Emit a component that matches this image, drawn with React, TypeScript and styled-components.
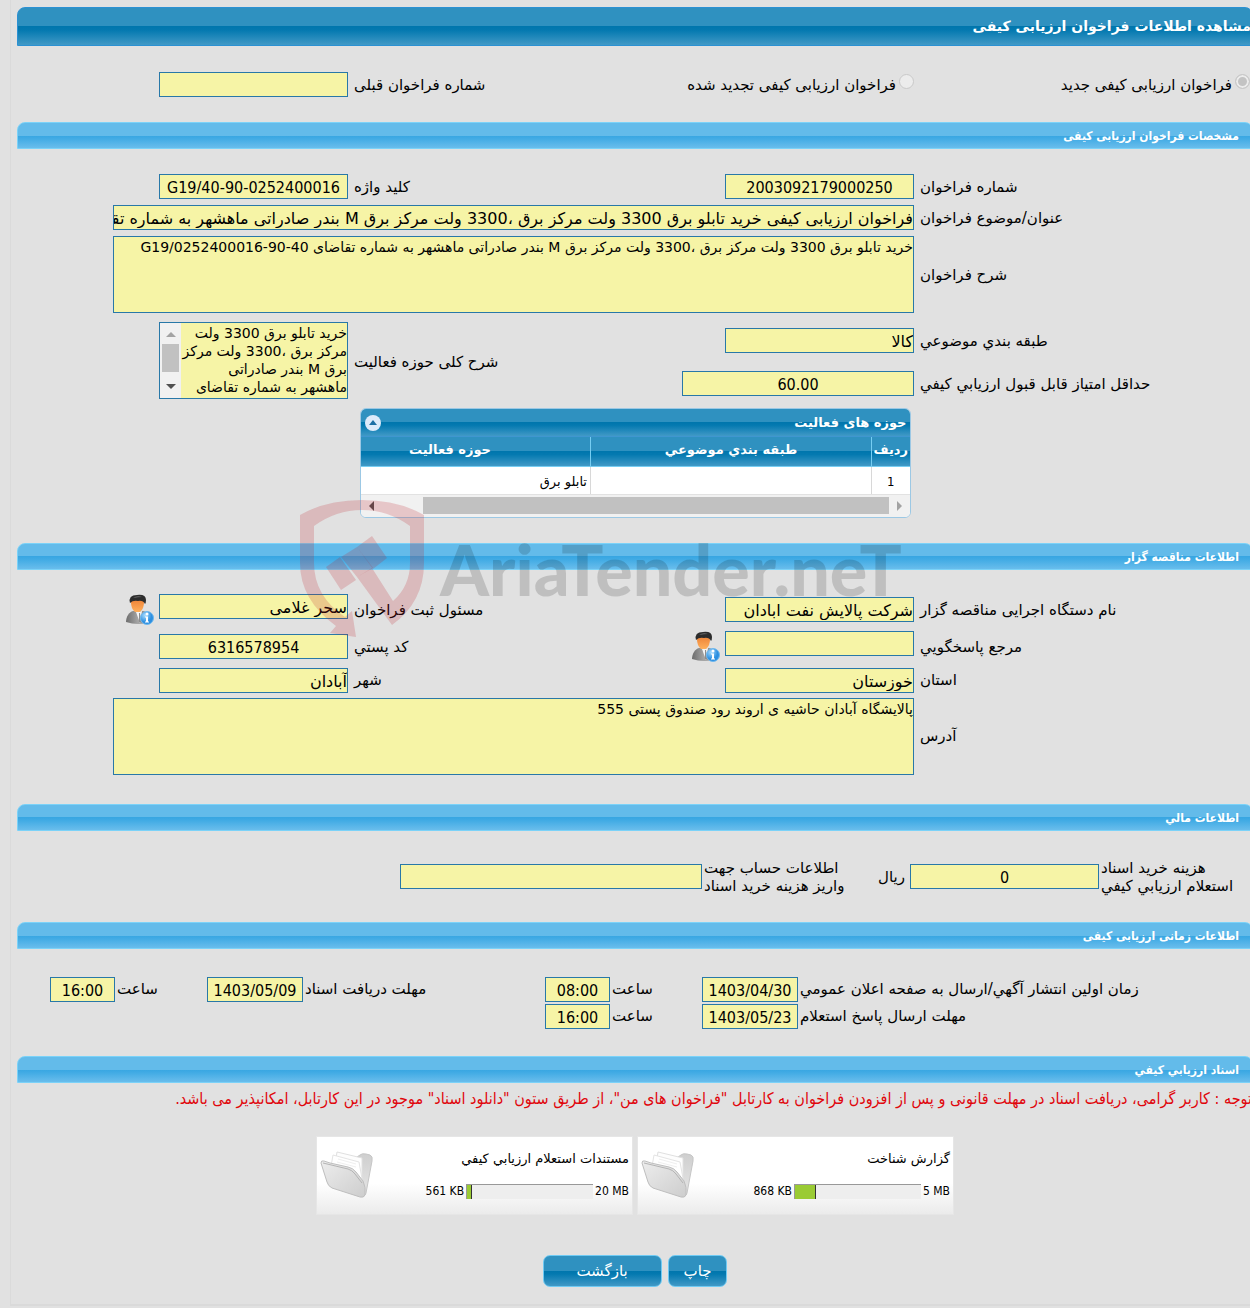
import React from "react";
import styled, { createGlobalStyle, css } from "styled-components";

const GlobalStyle = createGlobalStyle`
  *, *::before, *::after { box-sizing: border-box; }
  body {
    margin: 0;
    background: #e1e1e1;
    color: #000;
    font-family: "DejaVu Sans", Tahoma, sans-serif;
    font-size: 15px;
    line-height: 18px;
  }
  input, textarea, button { font: inherit; color: inherit; }
`;

const narrow = `"DejaVu Sans Condensed", "DejaVu Sans", Tahoma, sans-serif`;
const deepBlue = "linear-gradient(#2f91c0 0, #2f91c0 50%, #0076ad 50%, #0479b0 60%, #4199c6 100%)";
const skyBlue = "linear-gradient(#63bbea 0, #63bbea 50%, #38a6e2 50%, #3faae4 60%, #69bdec 100%)";

const Page = styled.div`
  direction: rtl;
  overflow: hidden;
  padding-left: 10px;
`;

const Sheet = styled.main`
  position: relative;
  margin-right: -3px;
  padding: 7px 0 17px 6px;
  border-left: 1px solid #dadada;
  border-bottom: 2px solid #dadada;
`;

const PageTitle = styled.h1`
  margin: 0;
  height: 39px;
  padding: 0 1px;
  border: 1px solid #2b91d3;
  border-radius: 8px 8px 0 0;
  background: ${deepBlue};
  color: #fff;
  font-size: 14px;
  line-height: 37px;
`;

const SectionTitle = styled.h2`
  margin: 0;
  height: 27px;
  padding: 0 13px;
  border: 1px solid #7bd2f8;
  border-radius: 8px 8px 0 0;
  background: ${skyBlue};
  color: #fff;
  font-family: ${narrow};
  font-size: 12px;
  line-height: 27px;
`;

const Section = styled.section<{ $top: number; $bottom: number }>`
  padding-top: ${(p) => p.$top}px;
  padding-bottom: ${(p) => p.$bottom}px;
`;

const FormGrid = styled.div`
  display: grid;
  grid-template-columns: minmax(0, 336fr) minmax(0, 226fr) minmax(0, 340fr) minmax(0, 334fr);
  row-gap: 6px;
  align-items: center;
`;

const PartyGrid = styled(FormGrid)`
  row-gap: 5px;
`;

const TallRows = styled(FormGrid)`
  margin-top: 6px;
  row-gap: 0;
  grid-auto-rows: 43px;
`;

const CostGrid = styled.div`
  display: grid;
  grid-template-columns: 153fr 255fr 142fr 686fr;
  align-items: center;
`;

const DateGrid = styled.div`
  display: grid;
  grid-template-columns: 454fr 97fr 91fr 66fr 241fr 97fr 91fr 99fr;
  row-gap: 2px;
  align-items: center;
`;

const Label = styled.label<{ $gap?: number }>`
  text-align: left;
  white-space: pre-line;
  padding-left: ${(p) => p.$gap ?? 3}px;
`;

const BlockLabel = styled(Label)`
  grid-row: span 2;
`;

const Cell = styled.div<{ $wide?: boolean }>`
  display: flex;
  align-items: flex-start;
  gap: 4px;
  min-width: 0;
  padding-right: 3px;
  ${(p) => p.$wide && css`grid-column: span 3; padding-left: 96px;`}
`;

const BlockCell = styled(Cell)`
  grid-row: span 2;
  align-self: start;
  padding-top: 3px;
`;

const PersonCell = styled(Cell)`
  height: 32px;
`;

const TightCell = styled.div`
  display: flex;
  align-items: center;
  gap: 5px;
  padding-right: 1px;
`;

const RadioCell = styled.div`
  display: flex;
  align-items: center;
  gap: 3px;
  padding-right: 3px;
  white-space: nowrap;
`;

const Radio = styled.input`
  appearance: none;
  flex: none;
  width: 15px;
  height: 15px;
  margin: 0 0 6px;
  border: 1px solid #c9c9c9;
  border-radius: 50%;
  background: #ececec;
  &:checked { box-shadow: inset 0 0 0 2px #ececec; background: #c3c3c3; }
`;

const fieldSkin = css`
  margin: 0;
  border: 1px solid #2878a8;
  border-radius: 0;
  background: #f6f4a6;
  outline: none;
`;

const Field = styled.input<{ $w?: number; $center?: boolean }>`
  ${fieldSkin}
  display: block;
  flex: none;
  width: ${(p) => (p.$w ? `${p.$w}px` : "100%")};
  height: 25px;
  padding: 2px 0 0;
  font-size: 16px;
  text-align: right;
  ${(p) => p.$center && css`font-family: ${narrow}; text-align: center;`}
`;

const Notes = styled.textarea`
  ${fieldSkin}
  display: block;
  width: 100%;
  height: 77px;
  padding: 1px 0;
  resize: none;
  overflow: hidden;
  font-size: 14px;
`;

const ScrollNotes = styled.div`
  ${fieldSkin}
  display: flex;
  width: 189px;
  height: 77px;
  textarea { flex: 1; min-width: 0; height: 75px; border: 0; }
`;

const ScrollRail = styled.span<{ $row?: boolean }>`
  display: flex;
  flex-direction: ${(p) => (p.$row ? "row" : "column")};
  align-items: center;
  justify-content: space-between;
  flex: none;
  background: #f1f1f1;
  ${(p) => (p.$row ? css`height: 22px; padding: 0 8px;` : css`width: 21px; padding: 9px 2px;`)}
`;

const Thumb = styled.span<{ $row?: boolean }>`
  background: #c1c1c1;
  ${(p) => (p.$row
    ? css`flex: 1; height: 17px; margin: 0 8px 0 49px;`
    : css`width: 17px; height: 28px; margin-bottom: 6px;`)}
`;

const Arrow = styled.span<{ $dir: "up" | "down" | "left" | "right"; $dark?: boolean }>`
  width: 0;
  height: 0;
  border: 5px solid transparent;
  ${(p) => {
    const c = p.$dark ? "#505050" : "#a3a3a3";
    if (p.$dir === "up") return css`border-top: 0; border-bottom-color: ${c};`;
    if (p.$dir === "down") return css`border-bottom: 0; border-top-color: ${c};`;
    if (p.$dir === "left") return css`border-left: 0; border-right-color: ${c};`;
    return css`border-right: 0; border-left-color: ${c};`;
  }}
`;

const GridPanel = styled.div`
  width: 551px;
  margin: 3px auto 0;
  overflow: hidden;
  border: 1px solid #9cc8e4;
  border-radius: 6px;
  background: #fff;
`;

const GridCaption = styled.div`
  display: flex;
  align-items: center;
  justify-content: space-between;
  height: 28px;
  padding: 0 3px 0 4px;
  border-bottom: 1px solid #3f96d0;
  background: ${deepBlue};
  color: #fff;
  font-size: 13px;
  font-weight: bold;
`;

const Collapse = styled.button`
  display: grid;
  place-items: center;
  width: 16px;
  height: 16px;
  padding: 0;
  border: 0;
  border-radius: 50%;
  background: #dceafa;
`;

const Table = styled.table`
  width: 600px;
  table-layout: fixed;
  border-collapse: collapse;
  font-size: 13px;
  th {
    height: 29px;
    padding: 0 0 2px;
    border-left: 1px solid #76cdf2;
    border-bottom: 1px solid #76cdf2;
    background: ${deepBlue};
    color: #fff;
    font-weight: bold;
    white-space: nowrap;
  }
  td {
    height: 28px;
    padding: 3px 3px 0;
    border-left: 1px solid #d8d8d8;
    border-bottom: 1px solid #e2e2e2;
  }
  td:first-child { text-align: center; font-family: ${narrow}; }
`;

const Notice = styled.p`
  margin: 0;
  padding-right: 1px;
  color: #e0060c;
  font-family: ${narrow};
  font-size: 16px;
  white-space: nowrap;
`;

const Cards = styled.div`
  display: flex;
  justify-content: center;
  gap: 4px;
  margin-top: 28px;
`;

const Card = styled.article`
  display: flex;
  direction: ltr;
  justify-content: space-between;
  align-items: center;
  width: 317px;
  height: 79px;
  padding: 0 3px;
  border: 1px solid #e6e6e6;
  background: linear-gradient(#fff 60%, #ebebeb);
`;

const CardBody = styled.div`
  display: flex;
  flex-direction: column;
  align-items: flex-end;
  gap: 14px;
  font-size: 13px;
`;

const CardName = styled.span`
  direction: rtl;
`;

const Usage = styled.div`
  display: flex;
  align-items: center;
  gap: 2px;
  font-family: ${narrow};
  font-size: 12px;
`;

const Track = styled.div`
  width: 127px;
  height: 15px;
  border-top: 1px solid #999;
  border-left: 1px solid #999;
  background: #eee;
`;

const Fill = styled.div`
  height: 100%;
  min-width: 5px;
  background: #9acb34;
  border-right: 1px solid #333;
`;

const Actions = styled.div`
  display: flex;
  justify-content: center;
  gap: 6px;
  margin-top: 40px;
`;

const Action = styled.button`
  height: 32px;
  padding: 0 15px;
  min-width: 59px;
  border: 1px solid #6fcaf3;
  border-radius: 7px;
  background: ${deepBlue};
  color: #fff;
`;

const WideAction = styled(Action)`
  min-width: 119px;
`;

const Watermark = styled.div`
  position: absolute;
  left: 287px;
  top: 498px;
  display: flex;
  direction: ltr;
  pointer-events: none;
  svg { flex: none; }
`;

const Wordmark = styled.span`
  margin: 36px 0 0 16px;
  color: rgba(0, 0, 0, 0.15);
  font: 900 70px/70px Lato, "DejaVu Sans Condensed", sans-serif;
  white-space: nowrap;
`;

function Person() {
  return (
    <svg width="30" height="32" viewBox="0 0 30 32" aria-hidden="true">
      <defs>
        <linearGradient id="suit" x1="0" x2="1"><stop stopColor="#6d6d6d" /><stop offset=".5" stopColor="#a5a5a5" /><stop offset="1" stopColor="#777" /></linearGradient>
        <linearGradient id="face" x1="0" x2="0" y1="0" y2="1"><stop stopColor="#e8752c" /><stop offset="1" stopColor="#ffb05c" /></linearGradient>
        <radialGradient id="info" cx=".35" cy=".3"><stop stopColor="#a8dcff" /><stop offset="1" stopColor="#2d8fe0" /></radialGradient>
      </defs>
      <path d="M1 28C1 23 4 18 8 17h10c5 1 7 6 7 11Q13 32 1 28Z" fill="url(#suit)" />
      <path d="M11 18l4 11 2-12Z" fill="#f4f4f4" />
      <path d="M14 19h1l1 9h-2Z" fill="#8d8d8d" />
      <path d="M6 8q0-6 6-6t7 6q0 7-4 10h-5Q6 15 6 8Z" fill="url(#face)" />
      <path d="M5 9Q3 1 12 1q9-1 9 5 0 3-1 4Q18 6 13 7 8 6 5 9Z" fill="#2c2c2c" />
      <path d="M8 4q4-3 9-1-4 0-9 1Z" fill="#6c6c6c" />
      <circle cx="22" cy="24" r="6.500" fill="url(#info)" stroke="#6db8ee" />
      <circle cx="22" cy="20" r="1.500" fill="#fff" />
      <path d="M20 22.500h3v5h1v1h-4v-1h1v-4h-1Z" fill="#fff" />
    </svg>
  );
}

function Folder() {
  return (
    <svg width="54" height="50" viewBox="0 0 54 50" aria-hidden="true">
      <defs>
        <linearGradient id="front" x1="0" y1="0" x2="1" y2="1"><stop stopColor="#ededed" /><stop offset="1" stopColor="#cdcdcd" /></linearGradient>
        <linearGradient id="back" x1="0" y1="0" x2="0" y2="1"><stop stopColor="#cfcfcf" /><stop offset="1" stopColor="#e6e6e6" /></linearGradient>
      </defs>
      <path d="M34 9 40 5q2-2 6-1l4 1q3 1 2 6L46 43q-1 4-5 3Z" fill="url(#back)" stroke="#c6c6c6" />
      <path d="M17 2 42 8 42 36 14 20Z" fill="#fdfdfd" stroke="#e0e0e0" />
      <path d="M13 5 39 12 43 34 10 22Z" fill="#fff" stroke="#e4e4e4" />
      <path d="M18 9l18 5M17 12l19 5" stroke="#efefef" />
      <path d="M1 13q0-3 3-2l6 2 18 4q5 1 8 5l7 9q3 6 2 14 -1 3-5 2L12 38q-4-2-5-6Z" fill="url(#front)" stroke="#bebebe" />
      <path d="M3 13l25 6q4 1 7 5l7 9" fill="none" stroke="#b4b4b4" />
    </svg>
  );
}

function Shield() {
  return (
    <svg width="126" height="140" viewBox="298 498 126 140" fill="rgb(190,30,40)" fillOpacity=".2" aria-hidden="true">
      <path d="M300 515Q326 500 362 500T424 515V563Q424 602 392 625L357 577 372 568 393 601Q410 586 410 563V526Q388 510 362 510T314 526V563Q314 596 345 617L352 611 356 637 330 633 336 626Q300 600 300 563Z" />
      <path d="M357 547 372 536 387 558 373 569Z" />
      <path d="M326 567 340 557 356 580 341 590Z" />
      <path d="M341 557 357 547 373 568 357 577Z" />
    </svg>
  );
}

type TextProps = { id: string; label: string; value?: string; w?: number; center?: boolean };

function TextPair({ id, label, value = "", w = 189, center }: TextProps) {
  return (
    <>
      <Label htmlFor={id}>{label}</Label>
      <Cell>
        <Field id={id} readOnly $w={w} $center={center} dir={center ? "ltr" : "rtl"} value={value} />
      </Cell>
    </>
  );
}

function PersonPair({ id, label, value = "" }: TextProps) {
  return (
    <>
      <Label htmlFor={id}>{label}</Label>
      <PersonCell>
        <Field id={id} readOnly $w={189} value={value} />
        <Person />
      </PersonCell>
    </>
  );
}

function Moment({ id, label, date, time }: { id: string; label: string; date: string; time: string }) {
  return (
    <>
      <Label $gap={1} htmlFor={id}>{label}</Label>
      <TightCell><Field id={id} readOnly $w={96} $center dir="ltr" value={date} /></TightCell>
      <Label $gap={1} htmlFor={id + "-time"}>ساعت</Label>
      <TightCell><Field id={id + "-time"} readOnly $w={65} $center dir="ltr" value={time} /></TightCell>
    </>
  );
}

function DocumentCard({ name, used, limit, ratio }: { name: string; used: string; limit: string; ratio: number }) {
  return (
    <Card>
      <Folder />
      <CardBody>
        <CardName>{name}</CardName>
        <Usage>
          <span>{used}</span>
          <Track><Fill style={{ width: `${ratio * 100}%` }} /></Track>
          <span>{limit}</span>
        </Usage>
      </CardBody>
    </Card>
  );
}

const subject = "خرید تابلو برق 3300 ولت مرکز برق ،3300 ولت مرکز برق M بندر صادراتی ماهشهر به شماره تقاضای";

export default function App() {
  return (
    <Page lang="fa">
      <GlobalStyle />
      <Sheet>
        <PageTitle>مشاهده اطلاعات فراخوان ارزیابی کیفی</PageTitle>
        <Section $top={26} $bottom={25}>
          <FormGrid>
            <RadioCell>
              <Radio type="radio" name="kind" id="kind-new" defaultChecked disabled />
              <label htmlFor="kind-new">فراخوان ارزیابی کیفی جدید</label>
            </RadioCell>
            <RadioCell>
              <Radio type="radio" name="kind" id="kind-renewed" disabled />
              <label htmlFor="kind-renewed">فراخوان ارزیابی کیفی تجدید شده</label>
            </RadioCell>
            <TextPair id="previous" label="شماره فراخوان قبلی" />
          </FormGrid>
        </Section>

        <SectionTitle>مشخصات فراخوان ارزیابی کیفی</SectionTitle>
        <Section $top={25} $bottom={25}>
          <FormGrid>
            <TextPair id="number" label="شماره فراخوان" value="2003092179000250" center />
            <TextPair id="keyword" label="کلید واژه" value="G19/40-90-0252400016" center />
            <Label htmlFor="title">عنوان/موضوع فراخوان</Label>
            <Cell $wide><Field id="title" readOnly value={"فراخوان ارزیابی کیفی " + subject} /></Cell>
            <Label htmlFor="description">شرح فراخوان</Label>
            <Cell $wide>
              <Notes id="description" readOnly value={subject + " \u2066G19/0252400016-90-40\u2069"} />
            </Cell>
          </FormGrid>
          <TallRows>
            <Label htmlFor="category">طبقه بندي موضوعي</Label>
            <Cell><Field id="category" readOnly $w={189} value="کالا" /></Cell>
            <BlockLabel htmlFor="activity">شرح کلی حوزه فعالیت</BlockLabel>
            <BlockCell>
              <ScrollNotes>
                <Notes id="activity" readOnly value={subject} />
                <ScrollRail>
                  <Arrow $dir="up" />
                  <Thumb />
                  <Arrow $dir="down" $dark />
                </ScrollRail>
              </ScrollNotes>
            </BlockCell>
            <Label htmlFor="score">حداقل امتیاز قابل قبول ارزیابي کیفي</Label>
            <Cell><Field id="score" readOnly $w={232} $center dir="ltr" value="60.00" /></Cell>
          </TallRows>
          <GridPanel>
            <GridCaption>
              حوزه های فعالیت
              <Collapse type="button" aria-label="بستن"><svg width="8" height="5" viewBox="0 0 8 5"><path d="M0 5 4 0 8 5Z" fill="#1d6fa5" /></svg></Collapse>
            </GridCaption>
            <Table>
              <colgroup><col width="38" /><col width="281" /><col width="281" /></colgroup>
              <thead><tr><th>ردیف</th><th>طبقه بندي موضوعي</th><th>حوزه فعالیت</th></tr></thead>
              <tbody><tr><td>1</td><td /><td>تابلو برق</td></tr></tbody>
            </Table>
            <ScrollRail $row>
              <Arrow $dir="right" />
              <Thumb $row />
              <Arrow $dir="left" $dark />
            </ScrollRail>
          </GridPanel>
        </Section>

        <SectionTitle>اطلاعات مناقصه گزار</SectionTitle>
        <Section $top={24} $bottom={29}>
          <PartyGrid>
            <TextPair id="agency" label="نام دستگاه اجرایی مناقصه گزار" value="شرکت پالایش نفت ابادان" />
            <PersonPair id="registrar" label="مسئول ثبت فراخوان" value="سحر غلامی" />
            <PersonPair id="contact" label="مرجع پاسخگويي" />
            <TextPair id="postcode" label="کد پستي" value="6316578954" center />
            <TextPair id="province" label="استان" value="خوزستان" />
            <TextPair id="city" label="شهر" value="آبادان" />
            <Label htmlFor="address">آدرس</Label>
            <Cell $wide><Notes id="address" readOnly value="پالایشگاه آبادان حاشیه ی اروند رود صندوق پستی 555" /></Cell>
          </PartyGrid>
        </Section>

        <SectionTitle>اطلاعات مالي</SectionTitle>
        <Section $top={28} $bottom={27}>
          <CostGrid>
            <Label $gap={1} htmlFor="cost">{"هزینه خرید اسناد\nاستعلام ارزیابي کیفي"}</Label>
            <TightCell>
              <Field id="cost" readOnly $w={189} $center dir="ltr" value="0" />
              <span>ریال</span>
            </TightCell>
            <Label $gap={1} htmlFor="account">{"اطلاعات حساب جهت\nواریز هزینه خرید اسناد"}</Label>
            <TightCell><Field id="account" readOnly $w={302} value="" /></TightCell>
          </CostGrid>
        </Section>

        <SectionTitle>اطلاعات زمانی ارزیابی کیفی</SectionTitle>
        <Section $top={28} $bottom={27}>
          <DateGrid>
            <Moment id="publish" label="زمان اولین انتشار آگهي/ارسال به صفحه اعلان عمومي" date="1403/04/30" time="08:00" />
            <Moment id="receive" label="مهلت دریافت اسناد" date="1403/05/09" time="16:00" />
            <Moment id="reply" label="مهلت ارسال پاسخ استعلام" date="1403/05/23" time="16:00" />
          </DateGrid>
        </Section>

        <SectionTitle>اسناد ارزیابي کیفي</SectionTitle>
        <Section $top={7} $bottom={0}>
          <Notice>توجه : کاربر گرامی، دریافت اسناد در مهلت قانونی و پس از افزودن فراخوان به کارتابل "فراخوان های من"، از طریق ستون "دانلود اسناد" موجود در این کارتابل، امکانپذیر می باشد.</Notice>
          <Cards>
            <DocumentCard name="گزارش شناخت" used="868 KB" limit="5 MB" ratio={868 / 5120} />
            <DocumentCard name="مستندات استعلام ارزیابي کیفي" used="561 KB" limit="20 MB" ratio={561 / 20480} />
          </Cards>
          <Actions>
            <Action type="button">چاپ</Action>
            <WideAction type="button">بازگشت</WideAction>
          </Actions>
        </Section>

        <Watermark>
          <Shield />
          <Wordmark>AriaTender.neT</Wordmark>
        </Watermark>
      </Sheet>
    </Page>
  );
}
